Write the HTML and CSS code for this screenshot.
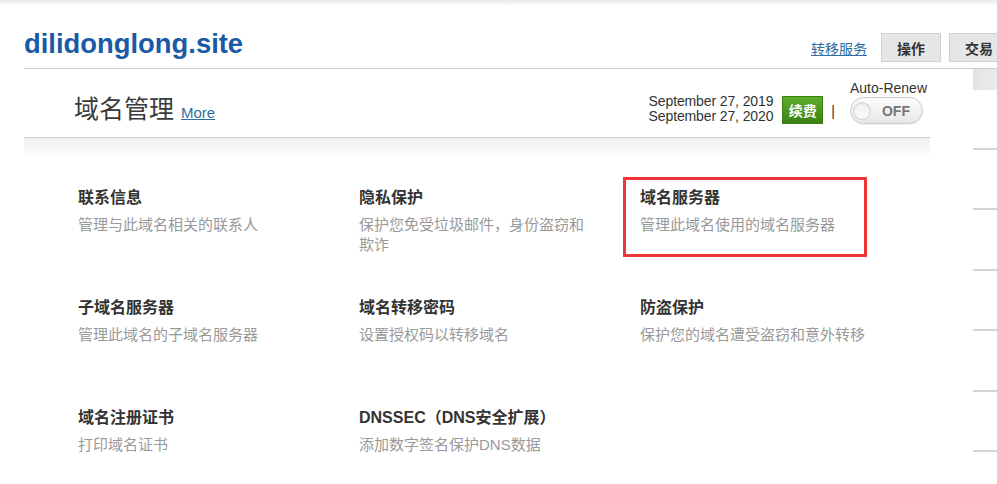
FILE: index.html
```html
<!DOCTYPE html>
<html lang="zh-CN">
<head>
<meta charset="utf-8">
<title>dilidonglong.site</title>
<link rel="stylesheet" href="styles.css">
</head>
<body>
<div class="topshade"></div>
<div class="page">
  <header class="head">
    <h1 class="domain">dilidonglong.site</h1>
    <div class="head-actions">
      <a class="link transfer" href="#">转移服务</a>
      <button class="btn">操作</button>
      <button class="btn">交易</button>
    </div>
  </header>
  <div class="content">
    <main class="main">
      <div class="section-head">
        <div class="section-title">
          <h2>域名管理</h2>
          <a class="link more" href="#">More</a>
        </div>
        <div class="renew">
          <div class="dates">
            <div>September 27, 2019</div>
            <div>September 27, 2020</div>
          </div>
          <button class="renew-btn">续费</button>
          <span class="sep">|</span>
          <div class="auto">
            <div class="auto-label">Auto-Renew</div>
            <div class="toggle"><span class="knob"></span><span class="toggle-text">OFF</span></div>
          </div>
        </div>
      </div>
      <div class="band"></div>
      <div class="grid">
        <div class="item">
          <h3>联系信息</h3>
          <p class="desc">管理与此域名相关的联系人</p>
        </div>
        <div class="item">
          <h3>隐私保护</h3>
          <p class="desc">保护您免受垃圾邮件，身份盗窃和欺诈</p>
        </div>
        <div class="item selected">
          <h3>域名服务器</h3>
          <p class="desc">管理此域名使用的域名服务器</p>
        </div>
        <div class="item">
          <h3>子域名服务器</h3>
          <p class="desc">管理此域名的子域名服务器</p>
        </div>
        <div class="item">
          <h3>域名转移密码</h3>
          <p class="desc">设置授权码以转移域名</p>
        </div>
        <div class="item">
          <h3>防盗保护</h3>
          <p class="desc">保护您的域名遭受盗窃和意外转移</p>
        </div>
        <div class="item">
          <h3>域名注册证书</h3>
          <p class="desc">打印域名证书</p>
        </div>
        <div class="item">
          <h3>DNSSEC（DNS安全扩展）</h3>
          <p class="desc">添加数字签名保护DNS数据</p>
        </div>
      </div>
    </main>
    <aside class="side">
      <div class="side-top"></div>
      <ul class="side-list">
        <li></li><li></li><li></li><li></li><li></li><li></li>
      </ul>
    </aside>
  </div>
</div>
</body>
</html>
```

FILE: styles.css
```css
html, body {
  margin: 0;
  padding: 0;
  background: #fff;
  overflow: hidden;
}

body {
  font-family: "Liberation Sans", "Noto Sans CJK SC", sans-serif;
  color: #333;
}

.topshade {
  height: 6px;
  background: linear-gradient(#e9e9e9, #ffffff);
}

.page {
  width: 1000px;
  padding-left: 24px;
}

.head {
  height: 62px;
  border-bottom: 1px solid #cccccc;
  display: flex;
  align-items: flex-end;
  justify-content: space-between;
  padding-right: 15px;
}

.domain {
  margin: 0 0 8px 0;
  font-size: 27.4px;
  line-height: 32px;
  font-weight: 700;
  color: #1a5aa5;
}

.head-actions {
  display: flex;
  align-items: center;
  margin-bottom: 6px;
}

.link {
  color: #2d6ea3;
  text-decoration: underline;
}

.transfer {
  font-size: 14px;
  line-height: 20px;
  padding-top: 3px;
  margin-right: 14px;
}

.btn {
  width: 60px;
  height: 29px;
  box-sizing: border-box;
  border: 1px solid #cfcfcf;
  background: #e6e6e6;
  font-family: "Liberation Sans", "Noto Sans CJK SC", sans-serif;
  font-size: 14px;
  font-weight: 700;
  color: #333;
  padding: 0;
  margin-left: 8px;
}

.btn:first-of-type {
  margin-left: 0;
}

.content {
  display: flex;
}

.main {
  width: 906px;
}

.section-head {
  height: 68px;
  border-bottom: 1px solid #cccccc;
  display: flex;
  justify-content: space-between;
}

.section-title {
  align-self: flex-end;
  display: flex;
  align-items: baseline;
  padding-left: 50px;
  padding-bottom: 11px;
}

.section-title h2 {
  margin: 0;
  font-size: 25px;
  line-height: 34px;
  font-weight: 400;
  color: #3a3a3a;
}

.more {
  font-size: 15px;
  margin-left: 7px;
}

.renew {
  display: flex;
  align-items: flex-end;
  padding-bottom: 13px;
  padding-right: 3px;
}

.dates {
  font-size: 14px;
  line-height: 15px;
  letter-spacing: -0.12px;
  text-align: right;
  color: #333;
}

.renew-btn {
  width: 41px;
  height: 28px;
  box-sizing: border-box;
  margin-left: 9px;
  padding: 0;
  border: 1px solid #3d7d16;
  background: linear-gradient(#5fae2e, #3b8113);
  color: #fff;
  font-family: "Liberation Sans", "Noto Sans CJK SC", sans-serif;
  font-size: 14px;
  font-weight: 700;
}

.sep {
  font-size: 14px;
  line-height: 20px;
  margin: 0 15px 3px 8px;
  color: #333;
}

.auto {
  display: flex;
  flex-direction: column;
}

.auto-label {
  font-size: 14px;
  line-height: 16px;
  color: #333;
}

.toggle {
  margin-top: 1px;
  width: 73px;
  height: 27px;
  box-sizing: border-box;
  border: 1px solid #cacaca;
  border-radius: 14px;
  background: linear-gradient(#fdfdfd, #e7e7e7);
  display: flex;
  align-items: center;
  box-shadow: 0 1px 1px rgba(0, 0, 0, 0.06);
}

.knob {
  width: 18px;
  height: 18px;
  box-sizing: border-box;
  margin-left: 2px;
  border-radius: 50%;
  border: 1px solid #d2d2d2;
  background: linear-gradient(#f1f1f1, #fbfbfb);
  box-shadow: inset 0 1px 2px rgba(0, 0, 0, 0.08);
}

.toggle-text {
  margin-left: 11px;
  font-size: 14px;
  font-weight: 700;
  color: #777;
}

.band {
  height: 20px;
  background: linear-gradient(#efefef, #ffffff);
}

.grid {
  margin-top: 19px;
  margin-left: 37px;
  display: grid;
  grid-template-columns: repeat(3, 244px);
  grid-auto-rows: 80px;
  column-gap: 37px;
  row-gap: 30px;
}

.item {
  box-sizing: border-box;
  border: 3px solid transparent;
  padding: 7px 0 0 14px;
}

.item.selected {
  border-color: #ef3535;
}

.item h3 {
  margin: 0;
  font-size: 16px;
  line-height: 22px;
  font-weight: 700;
  color: #333;
}

.desc {
  margin: 6px -6px 0 0;
  font-size: 15px;
  line-height: 20px;
  color: #999;
}

.side {
  margin-left: 43px;
  flex: 1;
}

.side-top {
  height: 21px;
  background: linear-gradient(to right, #e3e3e3, #f4f4f4);
}

.side-list {
  list-style: none;
  margin: 58px 0 0 0;
  padding: 0;
}

.side-list li {
  height: 58.4px;
  border-top: 2px solid #d4d4d4;
}

.side-list li:last-child {
  height: 20px;
}
```
